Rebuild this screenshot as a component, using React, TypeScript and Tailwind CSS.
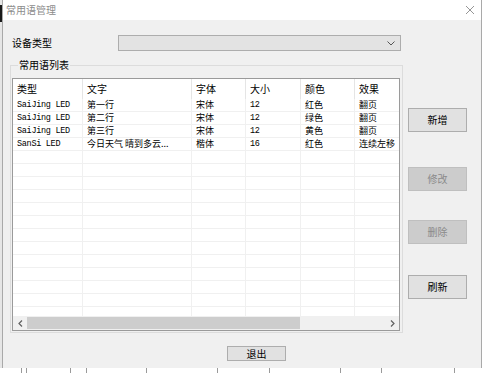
import React from "react";

const cjk = { fontFamily: '"Noto Sans CJK SC", "Noto Sans", sans-serif' };
const mono = { fontFamily: '"Liberation Mono", "Noto Sans CJK SC", monospace' };

const columns = ["类型", "文字", "字体", "大小", "颜色", "效果"];

const rows = [
  ["SaiJing LED", "第一行", "宋体", "12", "红色", "翻页"],
  ["SaiJing LED", "第二行", "宋体", "12", "绿色", "翻页"],
  ["SaiJing LED", "第三行", "宋体", "12", "黄色", "翻页"],
  ["SanSi LED", "今日天气 晴到多云...", "楷体", "16", "红色", "连续左移"],
];

const grid = "grid grid-cols-[70px_109px_54px_55px_54px_1fr]";

const Cell: React.FC<{ text?: string; idx: number }> = ({ text, idx }) => {
  const latin = idx === 0 || idx === 3;
  return (
    <div
      className={
        "h-[13px] pl-1 flex items-center whitespace-nowrap border-b border-[#f0f0f0] text-black leading-[12px] " +
        (idx < 5 ? "border-r" : "") +
        (latin ? " text-[8.5px] tracking-[-0.3px]" : " text-[9px]")
      }
      style={latin ? mono : cjk}
    >
      {text}
    </div>
  );
};

const Button: React.FC<{ label: string; disabled?: boolean; className?: string }> = ({
  label,
  disabled,
  className,
}) => (
  <div
    className={
      "w-[59px] h-[24px] flex items-center justify-center text-[10px] leading-[12px] border " +
      (disabled
        ? "bg-[#cccccc] border-[#bfbfbf] text-[#8a8a8a] "
        : "bg-[#e1e1e1] border-[#adadad] text-black ") +
      (className || "")
    }
    style={cjk}
  >
    {label}
  </div>
);

const ticks = [21, 4, 43, 15, 59, 70, 51, 70, 40, 72];

export default function App() {
  const emptyRows = Array.from({ length: 14 });
  return (
    <div className="w-[485px] h-[373px] bg-white overflow-hidden flex flex-col" style={cjk}>
      <div className="flex h-[368px]">
        {/* strip of the window behind */}
        <div className="w-[2px] flex flex-col bg-[#e6e6e6]">
          <div className="h-[5px]" />
          <div className="h-[17px] bg-[#1a1a1a]" />
        </div>

        <div className="w-[480px] h-[369px] border-l border-r border-b border-[#a9a9a9] flex flex-col">
          {/* title bar */}
          <div className="h-[20px] bg-white flex items-center justify-between pl-[3px] pr-[6px]">
            <span className="text-[10px] leading-[12px] text-[#8c8c8c]">常用语管理</span>
            <svg width="10" height="10" viewBox="0 0 10 10">
              <path d="M1 1 L9 9 M9 1 L1 9" stroke="#8a8a8a" strokeWidth="0.9" fill="none" />
            </svg>
          </div>

          {/* body */}
          <div className="flex-1 bg-[#f0f0f0] pl-[7px] pt-[15px] flex flex-col">
            <div className="flex items-center h-[16px]">
              <span className="ml-[2px] w-[106px] text-[10px] leading-[12px] text-black">设备类型</span>
              <div className="w-[283px] h-[16px] bg-[#e3e3e3] border border-[#adadad] flex items-center justify-end pr-[5px]">
                <svg width="8" height="5" viewBox="0 0 8 5">
                  <path d="M0.5 0.5 L4 4 L7.5 0.5" stroke="#555" strokeWidth="1" fill="none" />
                </svg>
              </div>
            </div>

            <div className="flex mt-[8px]">
              <fieldset className="w-[393px] border border-[#dcdcdc] pl-[1px] pb-[1px]">
                <legend className="ml-[6px] px-[1px] text-[10px] leading-[12px] text-black">
                  常用语列表
                </legend>
                <div className="mt-[7px] w-[388px] h-[253px] bg-white border border-[#9a9a9a] flex flex-col">
                  <div className={grid + " h-[20px] shrink-0"}>
                    {columns.map((c, i) => (
                      <div
                        key={c}
                        className={
                          "pl-1 flex items-center text-[10px] leading-[12px] text-black " +
                          (i < 5 ? "border-r border-[#e5e5e5]" : "")
                        }
                      >
                        {c}
                      </div>
                    ))}
                  </div>
                  <div className="flex-1 overflow-hidden">
                    {rows.map((r, ri) => (
                      <div key={ri} className={grid}>
                        {r.map((t, i) => (
                          <Cell key={i} text={t} idx={i} />
                        ))}
                      </div>
                    ))}
                    {emptyRows.map((_, ri) => (
                      <div key={"e" + ri} className={grid}>
                        {columns.map((c, i) => (
                          <Cell key={c} idx={i} />
                        ))}
                      </div>
                    ))}
                  </div>
                  {/* horizontal scrollbar */}
                  <div className="h-[14px] shrink-0 bg-[#f0f0f0] flex items-center">
                    <div className="w-[14px] flex justify-center">
                      <svg width="5" height="7" viewBox="0 0 5 7">
                        <path d="M4 0.5 L1 3.5 L4 6.5" stroke="#606060" strokeWidth="1.2" fill="none" />
                      </svg>
                    </div>
                    <div className="w-[273px] h-[12px] bg-[#cdcdcd]" />
                    <div className="flex-1" />
                    <div className="w-[14px] flex justify-center">
                      <svg width="5" height="7" viewBox="0 0 5 7">
                        <path d="M1 0.5 L4 3.5 L1 6.5" stroke="#606060" strokeWidth="1.2" fill="none" />
                      </svg>
                    </div>
                  </div>
                </div>
              </fieldset>

              <div className="ml-[5px] flex flex-col">
                <Button label="新增" className="mt-[49px]" />
                <Button label="修改" disabled className="mt-[35px]" />
                <Button label="删除" disabled className="mt-[29px]" />
                <Button label="刷新" className="mt-[31px]" />
              </div>
            </div>

            <div className="mt-[13px] ml-[217px] w-[59px] h-[15px] bg-[#e1e1e1] border border-[#adadad] flex items-center justify-center text-[10px] leading-[12px] text-black">
              退出
            </div>
          </div>
        </div>
        <div className="flex-1 bg-white" />
      </div>

      {/* table of the window behind */}
      <div className="flex-1 flex bg-white">
        {ticks.map((w, i) => (
          <div key={i} className="flex" style={{ marginLeft: w }}>
            <div className="w-px h-full bg-[#9a9a9a]" />
          </div>
        ))}
      </div>
    </div>
  );
}
